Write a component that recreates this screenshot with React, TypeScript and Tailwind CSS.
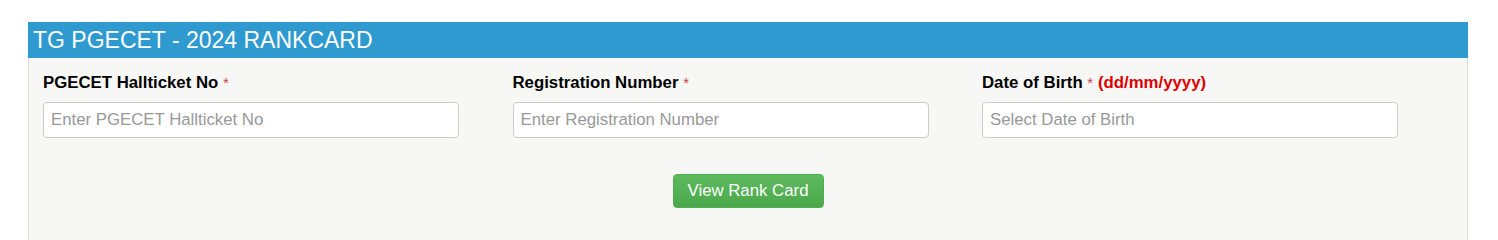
export default function App() {
  const fields = [
    { label: "PGECET Hallticket No", extra: "", placeholder: "Enter PGECET Hallticket No" },
    { label: "Registration Number", extra: "", placeholder: "Enter Registration Number" },
    { label: "Date of Birth", extra: "(dd/mm/yyyy)", placeholder: "Select Date of Birth" },
  ];

  return (
    <div className="min-h-screen bg-white pt-[22px] pl-[28px] pr-[30px]" style={{ fontFamily: '"Liberation Sans", Arial, sans-serif' }}>
      <div className="border border-[#dcdcdc] bg-[#f7f8f6] min-h-[240px]">
        <div className="bg-[#2e9ad0] h-[36px] flex items-center pl-[5px] text-white text-[23px] leading-none -mx-px -mt-px">
          TG PGECET - 2024 RANKCARD
        </div>
        <div className="pl-[14px] pt-[16px]">
          <div className="flex">
            {fields.map((f) => (
              <div key={f.label} className="w-[469.5px]">
                <label className="block text-[16.8px] font-bold text-black leading-[18px] mb-[10px]">
                  {f.label} <span className="text-[#d23b3b] font-normal text-[15px]">*</span>
                  {f.extra && <span className="text-[#dd0000]"> {f.extra}</span>}
                </label>
                <input
                  type="text"
                  placeholder={f.placeholder}
                  className="w-[416px] h-[36px] bg-white border border-[#cccccc] rounded-[4px] px-[7px] text-[16.8px] text-[#555] placeholder:text-[#999] outline-none"
                />
              </div>
            ))}
          </div>
          <div className="flex justify-center pt-[36px] pr-[14px]">
            <button className="w-[151px] h-[34px] rounded-[4px] border border-[#4cae4c] bg-gradient-to-b from-[#5fba5f] to-[#4aa84a] text-white text-[16.8px]">
              View Rank Card
            </button>
          </div>
        </div>
      </div>
    </div>
  );
}
